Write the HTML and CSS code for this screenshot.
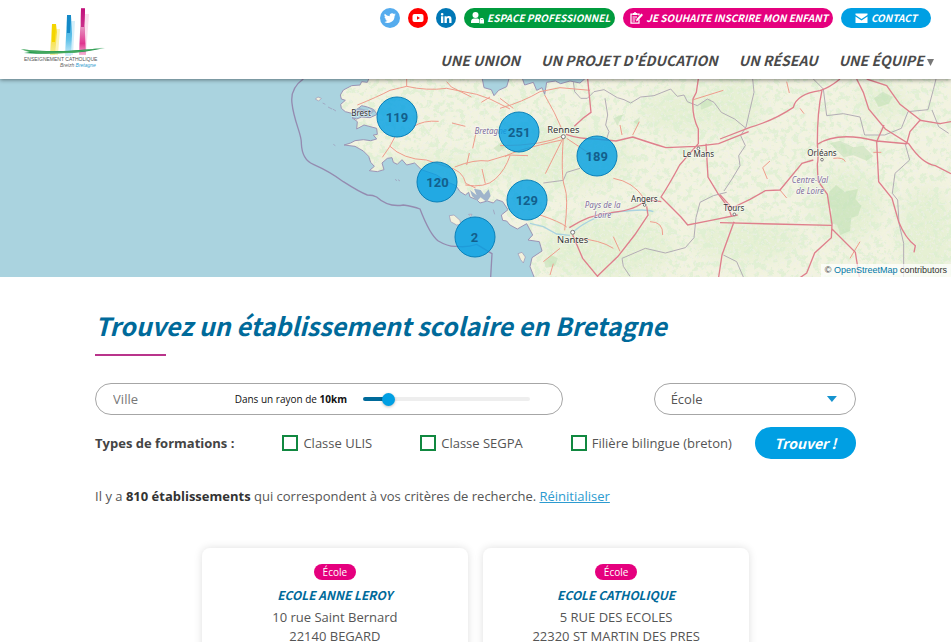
FILE: index.html
```html
<!DOCTYPE html>
<html lang="fr">
<head>
<meta charset="utf-8">
<meta name="viewport" content="width=device-width, initial-scale=1">
<title>Enseignement catholique Bretagne</title>
<link rel="stylesheet" href="styles.css">
</head>
<body>
<header class="site-header">
  <a class="logo" href="#" aria-label="Accueil">
    <svg viewBox="0 0 90 64" width="90" height="64">
      <defs>
        <linearGradient id="ly" x1="0" y1="0" x2="0" y2="1"><stop offset="0" stop-color="#f7dc10"/><stop offset=".6" stop-color="#f8e35a"/><stop offset="1" stop-color="#f3ee9a"/></linearGradient>
        <linearGradient id="lb" x1="0" y1="0" x2="0" y2="1"><stop offset="0" stop-color="#2aa0d8"/><stop offset=".6" stop-color="#63c3ea"/><stop offset="1" stop-color="#d3effa"/></linearGradient>
        <linearGradient id="lp" x1="0" y1="0" x2="0" y2="1"><stop offset="0" stop-color="#c2127b"/><stop offset=".35" stop-color="#e79cc5"/><stop offset=".75" stop-color="#e0358f"/><stop offset="1" stop-color="#f3b5d5"/></linearGradient>
      </defs>
      <path d="M35 21h4l-2 26h-5z" fill="#fbf3b4"/>
      <path d="M31 16h4l1 8-2 23h-5z" fill="url(#ly)"/>
      <path d="M31 16h4l-1 18h-3z" fill="#f4d500"/>
      <path d="M50 13h4l-2 34h-4z" fill="#d5effa"/>
      <path d="M46 8h4l1 18-1 22h-6z" fill="url(#lb)"/>
      <path d="M46 7h4l-1 18h-3z" fill="#1489c7"/>
      <path d="M64 6h4l-3 40h-3z" fill="#fae0ed"/>
      <path d="M60 1h4v24l1 22h-7z" fill="url(#lp)"/>
      <path d="M60 0h4l-1 19h-3z" fill="#c2127b" opacity=".8"/>
      <path d="M0 41c14 2 26 2 42 2 16-1 28-2 42-3-14 3-27 5-41 5-17 1-30 1-40 0l6-1z" fill="#1b9448"/>
      <path d="M0 41c14 2 50 5 84-2-26 7-60 9-80 4z" fill="#5fb66f" opacity=".6"/>
      <text x="3" y="53" class="logo-name">ENSEIGNEMENT CATHOLIQUE</text>
      <text x="39" y="59" class="logo-region">Breizh <tspan fill="#2e9ccf">Bretagne</tspan></text>
    </svg>
  </a>
  <div class="header-side">
    <div class="quick">
      <a class="social twitter" href="#" aria-label="Twitter"><svg viewBox="0 0 24 24"><path fill="#fff" d="M23.6 4.9a9.700 9.700 0 0 1-2.800.8 4.900 4.900 0 0 0 2.100-2.700 9.700 9.700 0 0 1-3.100 1.200 4.800 4.800 0 0 0-8.300 4.400A13.700 13.700 0 0 1 1.600 3.600a4.900 4.900 0 0 0 1.500 6.500 4.800 4.800 0 0 1-2.200-.6 4.800 4.800 0 0 0 3.900 4.800 4.800 4.800 0 0 1-2.200.1 4.800 4.800 0 0 0 4.500 3.300A9.700 9.700 0 0 1 0 19.700 13.700 13.700 0 0 0 21.100 7.500c1-.7 1.800-1.600 2.500-2.600z"/></svg></a>
      <a class="social youtube" href="#" aria-label="YouTube"><svg viewBox="0 0 24 24"><rect x="1" y="4" width="22" height="16" rx="4" fill="#fff"/><path d="M10 8.500v7l6-3.500z" fill="#f00"/></svg></a>
      <a class="social linkedin" href="#" aria-label="LinkedIn"><svg viewBox="0 0 24 24"><path fill="#fff" d="M2 8.500h4.600V22H2zM4.300 2a2.600 2.600 0 1 1 0 5.200 2.600 2.600 0 0 1 0-5.200zM9 8.500h4.400v1.900c.7-1.200 2.200-2.300 4.300-2.300 4.500 0 5.300 3 5.300 6.800V22h-4.600v-6.300c0-1.600 0-3.600-2.200-3.600s-2.500 1.700-2.500 3.400V22H9z"/></svg></a>
      <a class="pill green" href="#"><svg viewBox="0 0 26 24"><circle cx="9" cy="6" r="6" fill="#fff"/><path fill="#fff" d="M0 22v-3c0-4 3-6 6-6h6c2 0 3 .5 4 1.500V22z"/><path fill="#fff" d="M17 15h9v8h-9z"/><path d="M19 16v-3h5v3" fill="none" stroke="#fff" stroke-width="2"/></svg>ESPACE PROFESSIONNEL</a>
      <a class="pill pink" href="#"><svg viewBox="0 0 26 24"><path d="M18 15v7H2V4h4M13 4h5v3" fill="none" stroke="#fff" stroke-width="2.500"/><path d="M6 6V2h2a2 2 0 0 1 4 0h2v4z" fill="#fff"/><path d="M5 10h9M5 14h6M5 18h5" stroke="#fff" stroke-width="2"/><path d="M12 19l1-5L23 3l3 3-10 11z" fill="#fff"/></svg>JE SOUHAITE INSCRIRE MON ENFANT</a>
      <a class="pill blue" href="#"><svg viewBox="0 0 26 24"><path fill="#fff" d="M1 3h24v3l-12 8L1 6zM1 9l12 8 12-8v13H1z"/></svg>CONTACT</a>
    </div>
    <nav class="main-nav">
      <a href="#">UNE UNION</a>
      <a href="#">UN PROJET D'ÉDUCATION</a>
      <a href="#">UN RÉSEAU</a>
      <a href="#">UNE ÉQUIPE <span class="caret"></span></a>
    </nav>
  </div>
</header>

<section class="map" aria-label="Carte des établissements">
  <svg class="map-art" viewBox="-840 12 2853 594" preserveAspectRatio="xMidYMid slice">
    <defs>
      <path id="land" d="M270 2L262 22 245 20 240 30 215 32 190 45 181 60 184 72 196 76 182 88 184 100 196 110 215 115 235 100 245 92 262 96 280 103 292 118 270 128 245 126 230 132 216 128 232 140 230 162 252 150 290 160 292 178 280 180 290 192 272 197 250 194 225 197 212 204 192 210 225 214 250 228 266 244 272 262 283 274 268 287 292 290 312 284 306 264 322 250 336 248 340 262 352 268 366 254 380 270 404 264 424 284 470 300 500 320 528 332 540 350 556 360 566 352 570 366 590 374 600 384 622 378 640 384 650 374 668 380 684 404 664 420 668 436 680 438 690 450 712 462 740 446 758 480 744 495 778 500 786 528 756 548 750 575 770 626H2033V2H925L900 24 870 18 842 26 826 18 800 22 794 58 786 38 770 46 760 22 734 30 724 2H690L680 35 656 46 642 62 634 44 612 38 605 2Z"/>
      <clipPath id="land-clip"><use href="#land"/></clipPath>
      <filter id="woods" x="0" y="0" width="100%" height="100%">
        <feTurbulence type="fractalNoise" baseFrequency=".05" numOctaves="5" seed="7"/>
        <feColorMatrix values="0 0 0 0 .72  0 0 0 0 .86  0 0 0 0 .64  12 0 0 0 -6.300"/>
      </filter>
      <filter id="towns" x="0" y="0" width="100%" height="100%">
        <feTurbulence type="fractalNoise" baseFrequency=".12" numOctaves="3" seed="21"/>
        <feColorMatrix values="0 0 0 0 .86  0 0 0 0 .86  0 0 0 0 .83  0 9 0 0 -5"/>
      </filter>
      <filter id="soft"><feGaussianBlur stdDeviation="22"/></filter>
    </defs>
    <rect x="-840" y="12" width="2853" height="594" fill="#aad3df"/>
    <use href="#land" fill="#f2f3e0"/>
    <g clip-path="url(#land-clip)">
      <g fill="#d9edc6" filter="url(#soft)" opacity=".5">
        <ellipse cx="470" cy="280" rx="200" ry="35"/><ellipse cx="860" cy="250" rx="190" ry="90"/><ellipse cx="980" cy="520" rx="200" ry="90"/>
        <ellipse cx="1200" cy="110" rx="120" ry="60"/><ellipse cx="1700" cy="390" rx="100" ry="110"/><ellipse cx="1940" cy="480" rx="80" ry="140"/>
        <ellipse cx="1360" cy="90" rx="80" ry="80"/><ellipse cx="1810" cy="80" rx="70" ry="50"/><ellipse cx="1400" cy="500" rx="160" ry="60"/>
      </g>
      <rect x="160" y="12" width="1853" height="594" filter="url(#woods)" opacity=".75"/>
      <rect x="160" y="12" width="1853" height="594" filter="url(#towns)" opacity=".5"/>
      <g fill="#b9dcae" opacity=".45">
        <path d="M1648 350l20-20 26 20 40-8-8 30 18 20-10 30-20 6-4 40-30 12-8-30-22-6 6-40-14-20z"/>
        <path d="M1650 205l30-8 40 20 30-4 30 30-20 14-40-16-30 6z"/><path d="M1782 70l26-20 30 16-12 20-30 10z"/>
        <path d="M1260 85l30-15 8 20-34 14z"/><path d="M640 220l24-18 12 14-20 16z"/><path d="M792 560l20-20 22 10-10 24-26 4z"/>
        <path d="M1000 130l30-12-18 34zM1060 140l20-14-6 24z"/>
      </g>
      <path d="M750 445l40 10 40 22 40 4M880 470q60-50 140-60t100 0" fill="none" stroke="#aad3df" stroke-width="4"/>
    </g>
    <use href="#land" fill="none" stroke="#9b94b5" stroke-width="3"/>
    <g fill="#f2f1dc" stroke="#9b94b5" stroke-width="2">
      <path d="M508 422l14-2 18 16 2 12-12 2-18-10zM714 536l12-4 10 14-6 18-8-10zM106 72l8-6 10 4-8 8zM566 418l10 0-4 6z"/>
      <path d="M128 84l8 4M144 96l12 6M158 102l10 6M346 312l4 6M354 314l6 4M160 208l6 4M640 404l4 14" fill="none"/>
    </g>
    <path d="M570 345l20 16-8-20 20 4 10 14 14-16 6 20-12 18-18-14-10 10-16-14zM224 104l12-6 22 6 30 0-14 12-30 4z" fill="#9fb4cb"/>
    <g fill="none" stroke="#948bb0" stroke-width="4">
      <path d="M70 12Q30 40 36 85C42 140 66 180 64 205Q66 255 100 268 150 290 190 320 240 352 262 360 280 360 290 366 325 398 370 390 400 394 420 402 450 480 475 498 505 516 530 514 560 518 590 508L636 536 632 606"/>
    </g>
    <g fill="none" stroke="#b3adb5" stroke-width="3">
      <path d="M880 20l4 30 18 20 20 0 20-20 30-6 40 24 20 6 20 10 30-18 40-4 50-20 20 22 20-4 10 20 30 12 30-20 20 10 22 30 40 20 34 28"/>
      <path d="M975 70l8 50-6 30 10 20-8 24M900 280l-40 12-10 24-60 8M1026 550l70-30 60 14 60-16 26-30 6-60 12-46 40-20 40-10M1026 550l4 24 20 30"/>
      <path d="M1418 12l4 40-14 60-10 44-16 26 14 30-20 30 4 30-24 40-24 36M1600 12l30 30 10 80 50-6 50 10 14 54 60 0 50-20 20-50 60-6 16-60 8-32M1875 205l14 50-44 40-8 60 16 20 4 70 14 60 0 110M1956 105l20 50 30 20M1330 540l40 20 20 46"/>
    </g>
    <g fill="none" stroke="#ef9c8c" stroke-width="3">
      <path d="M232 90q60-24 98-44l50-12q60 14 120 6l90 18 40 14 60 30M380 34l0-22M500 20l14 16 60 30M630 66l-26 16M345 185l-16 30-22 32M329 213q40 40 110 42l60 20q50 10 58 50l30 14M400 155q30-20 76-16M516 144l40 10M524 276q60-24 100-18l60-18 60 2M560 270l8-36M606 282l10 44M556 330q60 10 90-18t44-70M578 220l10-46"/>
      <path d="M660 100q70-20 120-50l60-12 90 8M794 60q30 50 56 112M850 182q-60 30-190 30M850 188l-54 108M850 186q-8 120 4 150t0 130M860 190l90 60M780 420q60 20 80 36M1000 310q60 10 92 60M890 490q70 4 110 30M1000 485l20 44M1020 150l6 30M1078 140l-20 40M1110 440q40 0 38 40M810 600l10-34M700 100l-40-30M675 245q30-20 170-50M840 520l-50 40"/>
      <path d="M1780 232l24 0M1660 250q30-4 36 10M1500 345l20 24M1470 258l-22 20 14 34M1560 100l12 16M1520 20l8 34M1740 500l-30 50M1240 74l90-28"/>
    </g>
    <g fill="none" stroke="#df7f8c" stroke-width="4">
      <path d="M923 12l6 60 4 40-24 18-26 24M858 178q40 14 90 14l60 6 50-12q60 20 100 32l88-4 70-8 90-36M1255 12l-6 40-10 20q-4 50 16 90l0 44q-26 30-56 64-32 60-56 96 30 30 60 60l20 24 70-14 80-16M1278 206l6 100 30 50 30 40 10 26M868 458q60-40 130-46t100-38l46 6M1100 394l4 26-40 60-50 64-62 60M878 480l30 70 46 56"/>
      <path d="M1320 192l90-35q70-20 130-60 10-40 80-50 30-10 60-35M1626 46q-14 60-14 160 4 50 0 60l2 52 28 40 14 90-2 40-50 46-24 60-20 14M1612 208q60-40 178-10l90 8 10-36 30-34 60 10 33-6M1730 12l20 40 16 50 50 60 70 44q40 60 80 66l47 24M1760 12l60 20 40 56 62 48M1812 150l-22 50 6 120 40 50 20 70q20 50 50 72l-4 20M1600 255l-34 10-66 80-44 2-46 26-54 26-36-40M1320 443q80 2 160 4t174 4M1362 440l-36 100-10 66M1656 462l70 70 12 74"/>
    </g>
    <g class="map-place">
      <g fill="#fff" stroke="#777" stroke-width="3"><circle cx="850" cy="185" r="6"/><circle cx="878" cy="472" r="6"/><circle cx="1255" cy="220" r="4"/><circle cx="1626" cy="254" r="4"/><circle cx="1363" cy="418" r="4"/><circle cx="1094" cy="390" r="4"/></g>
      <text x="243" y="122">Brest</text>
      <text x="850" y="174" class="big">Rennes</text>
      <text x="878" y="503" class="big">Nantes</text>
      <text x="1255" y="246">Le Mans</text>
      <text x="1093" y="382">Angers</text>
      <text x="1626" y="244">Orléans</text>
      <text x="1362" y="408">Tours</text>
      <g class="area"><text x="632" y="178">Bretagne</text><text x="968" y="398">Pays de la</text><text x="968" y="430">Loire</text><text x="1590" y="325">Centre-Val</text><text x="1590" y="357">de Loire</text></g>
    </g>
  </svg>
  <button class="cluster brest">119</button>
  <button class="cluster centre">251</button>
  <button class="cluster rennes">189</button>
  <button class="cluster lorient">120</button>
  <button class="cluster redon">129</button>
  <button class="cluster belle-ile">2</button>
  <p class="attribution">© <a href="#">OpenStreetMap</a> contributors</p>
</section>

<main class="content">
  <h1>Trouvez un établissement scolaire en Bretagne</h1>
  <form class="search">
    <div class="search-row">
      <div class="field place">
        <input type="text" placeholder="Ville" aria-label="Ville">
        <label for="radius">Dans un rayon de <b>10km</b></label>
        <input type="range" id="radius" min="0" max="80" value="10">
      </div>
      <div class="field kind">
        <select aria-label="Type d'établissement"><option>École</option><option>Collège</option><option>Lycée</option></select>
      </div>
    </div>
    <div class="filters">
      <div class="options">
        <b>Types de formations :</b>
        <label><input type="checkbox">Classe ULIS</label>
        <label><input type="checkbox">Classe SEGPA</label>
        <label><input type="checkbox">Filière bilingue (breton)</label>
      </div>
      <button type="submit" class="submit">Trouver !</button>
    </div>
  </form>
  <p class="summary">Il y a <b>810 établissements</b> qui correspondent à vos critères de recherche. <a href="#">Réinitialiser</a></p>
  <div class="cards">
    <article class="card">
      <span class="tag">École</span>
      <h2>ECOLE ANNE LEROY</h2>
      <p>10 rue Saint Bernard<br>22140 BEGARD</p>
    </article>
    <article class="card">
      <span class="tag">École</span>
      <h2>ECOLE CATHOLIQUE</h2>
      <p>5 RUE DES ECOLES<br>22320 ST MARTIN DES PRES</p>
    </article>
  </div>
</main>
</body>
</html>
```
FILE: styles.css
```css
:root {
  --heading: "Source Sans Pro", "Noto Sans CJK JP", "Open Sans", sans-serif;
  --blue: #009fe3;
  --navy: #006a9a;
  --pink: #e5007e;
  --green: #009b3e;
}
* { box-sizing: border-box; }
body {
  margin: 0;
  background: #fff;
  color: #555;
  font: 13px/19px "Open Sans", sans-serif;
}
a { color: inherit; text-decoration: none; }
button, input, select { font: inherit; color: inherit; margin: 0; }

.site-header {
  position: relative;
  z-index: 1;
  display: flex;
  justify-content: space-between;
  padding: 8px 17px 7px 21px;
  box-shadow: 0 1px 4px rgba(0, 0, 0, .45);
}
.logo svg { display: block; }
.logo-name { font: 5px "Liberation Sans", sans-serif; fill: #555; }
.logo-region { font: italic 5px "Liberation Sans", sans-serif; fill: #666; }
.header-side { display: flex; flex-direction: column; gap: 20px; }
.quick { display: flex; gap: 8px; justify-content: flex-end; padding-right: 3px; }
.social {
  display: grid;
  place-items: center;
  width: 20px;
  height: 20px;
  border-radius: 50%;
}
.social svg { width: 12px; height: 12px; }
.twitter { background: #55acee; }
.youtube { background: #f00; }
.linkedin { background: #0077b5; }
.pill {
  display: flex;
  align-items: center;
  gap: 3px;
  height: 20px;
  padding: 0 5px 0 7px;
  border-radius: 10px;
  color: #fff;
  font: italic bold 10px/20px var(--heading);
  white-space: nowrap;
}
.pill svg { width: 13px; height: 12px; }
.green { background: var(--green); }
.pink { background: var(--pink); }
.blue { background: var(--blue); padding: 0 14px; }
.main-nav {
  display: flex;
  justify-content: flex-end;
  gap: 21px;
  color: #4a4a4a;
  font: italic bold 14px/24px var(--heading);
}
.caret {
  display: inline-block;
  width: 7px;
  height: 7px;
  background: #777;
  clip-path: polygon(0 0, 100% 0, 50% 100%);
}

.map { position: relative; height: 198px; overflow: hidden; background: #aad3df; }
.map-art { display: block; width: 100%; height: 100%; }
.map-place text {
  font: 24px "Noto Sans", sans-serif;
  fill: #333;
  text-anchor: middle;
  paint-order: stroke;
  stroke: rgba(255, 255, 255, .6);
  stroke-width: 4px;
}
.map-place .big { font-size: 28px; }
.map-place .area text { font-style: italic; fill: #83709c; }
.cluster {
  position: absolute;
  width: 41px;
  height: 41px;
  padding: 0;
  transform: translate(-50%, -50%);
  border: 1px solid #0b80b8;
  border-radius: 50%;
  background: rgba(0, 159, 227, .8);
  color: #135f8c;
  font: bold 13px/39px Roboto, sans-serif;
}
.brest { left: 41.75%; top: 19%; }
.centre { left: 54.6%; top: 27%; }
.rennes { left: 62.75%; top: 39%; }
.lorient { left: 46%; top: 52%; }
.redon { left: 55.4%; top: 61%; }
.belle-ile { left: 49.9%; top: 80%; }
.attribution {
  position: absolute;
  right: 0;
  bottom: 0;
  margin: 0;
  padding: 0 4px;
  background: rgba(255, 255, 255, .7);
  color: #333;
  font: 9px/13px "Liberation Sans", sans-serif;
}
.attribution a { color: #0078a8; }

.content { width: 80%; margin: 0 auto; padding: 28px 0 24px; }
h1 {
  margin: 0;
  color: var(--navy);
  font: italic bold 25px/40px var(--heading);
}
h1::after {
  content: "";
  display: block;
  width: 71px;
  height: 2px;
  margin-top: 9px;
  background: #b9348b;
}
.search { margin-top: 27px; }
.search-row { display: grid; grid-template-columns: 467fr 202fr; gap: 91px; }
.field {
  position: relative;
  display: flex;
  align-items: center;
  height: 32px;
  border: 1px solid #a6a6a6;
  border-radius: 16px;
}
.place { padding: 0 32px 0 17px; }
.place input[type="text"] {
  flex: 1;
  min-width: 0;
  padding: 0;
  border: 0;
  outline: 0;
  background: none;
}
.place input::placeholder { color: #777; opacity: 1; }
.place label { margin-right: 16px; color: #111; font-size: 10px; white-space: nowrap; }
.place input[type="range"] {
  width: 40%;
  height: 14px;
  appearance: none;
  background: none;
}
input[type="range"]::-webkit-slider-runnable-track {
  height: 4px;
  border-radius: 2px;
  background: linear-gradient(90deg, var(--navy) 15%, #eee 15%);
}
input[type="range"]::-webkit-slider-thumb {
  appearance: none;
  width: 13px;
  height: 13px;
  margin-top: -4px;
  border-radius: 50%;
  background: var(--blue);
  box-shadow: 0 1px 3px rgba(0, 0, 0, .25);
}
.kind select {
  width: 100%;
  height: 30px;
  padding: 0 16px;
  appearance: none;
  border: 0;
  border-radius: 15px;
  background: none;
}
.kind::after {
  content: "";
  position: absolute;
  right: 18px;
  top: 12px;
  width: 10px;
  height: 6px;
  background: #1593cf;
  clip-path: polygon(0 0, 100% 0, 50% 100%);
  pointer-events: none;
}
.filters { display: flex; align-items: center; justify-content: space-between; margin-top: 12px; white-space: nowrap; }
.options { display: flex; align-items: center; gap: 48px; }
.options b { color: #444; }
.options label { display: flex; align-items: center; gap: 5px; }
.options input {
  width: 16px;
  height: 16px;
  appearance: none;
  border: 2px solid #118840;
}
.submit {
  width: 101px;
  height: 32px;
  padding: 0;
  border: 0;
  border-radius: 16px;
  background: var(--blue);
  color: #fff;
  font: italic bold 14px/32px var(--heading);
}
.summary { margin: 28px 0 0; }
.summary b { color: #333; }
.summary a { color: #2d9bd0; text-decoration: underline; }
.cards {
  display: grid;
  grid-template-columns: repeat(2, 35%);
  justify-content: center;
  gap: 15px;
  margin-top: 42px;
}
.card {
  padding: 16px 16px 24px;
  border-radius: 8px;
  box-shadow: 0 0 8px rgba(0, 0, 0, .13);
  text-align: center;
}
.tag {
  display: block;
  width: 42px;
  margin: 0 auto;
  border-radius: 8px;
  background: var(--pink);
  color: #fff;
  font-size: 10px;
  line-height: 16px;
}
.card h2 {
  margin: 5px 0 3px;
  color: var(--navy);
  font: italic bold 12px/20px var(--heading);
}
.card p { margin: 0; }
```
